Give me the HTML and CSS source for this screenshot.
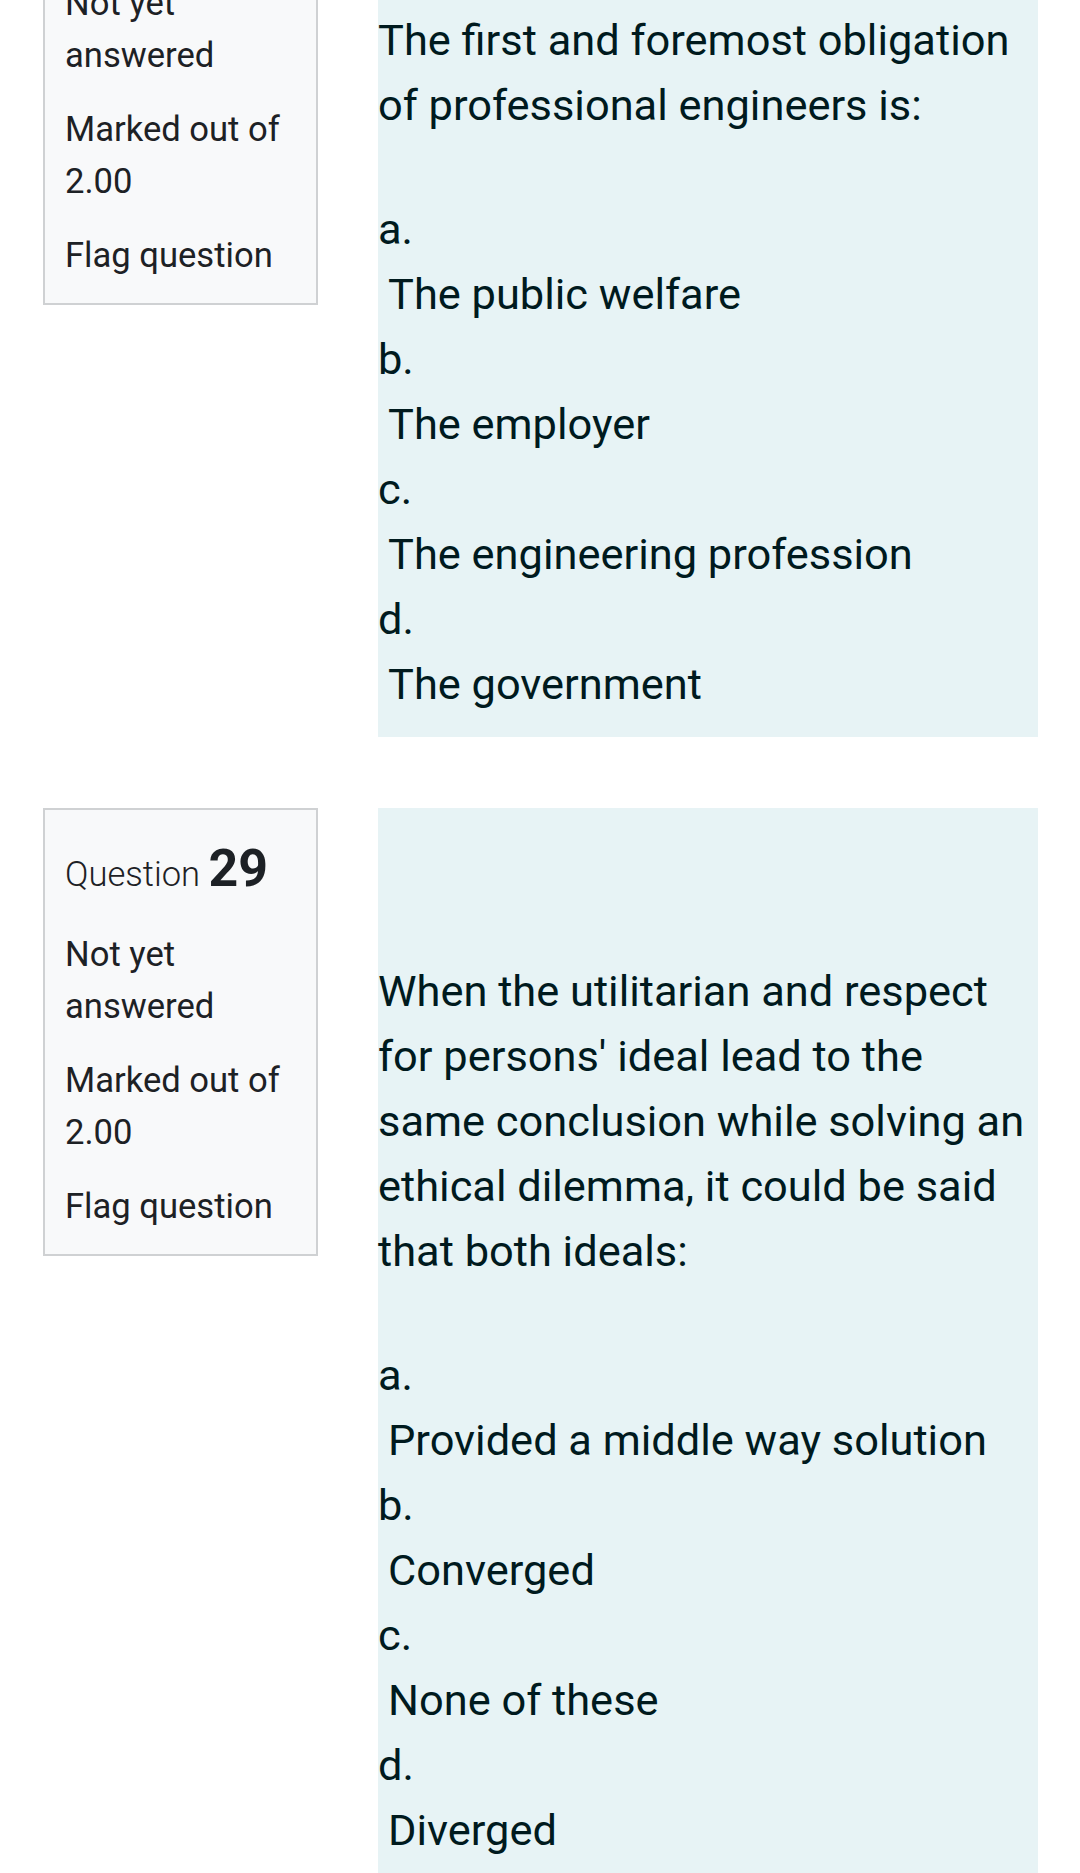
FILE: index.html
```html
<!DOCTYPE html>
<html lang="en">
<head>
<meta charset="utf-8">
<title>Quiz</title>
<link rel="stylesheet" href="styles.css">
</head>
<body>
<div class="page">
  <div class="que">
    <div class="info">
      <h3 class="no">Question <span class="qno">28</span></h3>
      <div class="state">Not yet answered</div>
      <div class="grade">Marked out of 2.00</div>
      <div class="flag">Flag question</div>
    </div>
    <div class="formulation">
      <div class="qtext">The first and foremost obligation of professional engineers is:</div>
      <div class="answer">
        <div class="opt"><span class="lbl">a.</span><span class="ans">The public welfare</span></div>
        <div class="opt"><span class="lbl">b.</span><span class="ans">The employer</span></div>
        <div class="opt"><span class="lbl">c.</span><span class="ans">The engineering profession</span></div>
        <div class="opt"><span class="lbl">d.</span><span class="ans">The government</span></div>
      </div>
    </div>
  </div>
  <div class="que">
    <div class="info">
      <h3 class="no">Question <span class="qno">29</span></h3>
      <div class="state">Not yet answered</div>
      <div class="grade">Marked out of 2.00</div>
      <div class="flag">Flag question</div>
    </div>
    <div class="formulation">
      <div class="qtext">When the utilitarian and respect for persons' ideal lead to the same conclusion while solving an ethical dilemma, it could be said that both ideals:</div>
      <div class="answer">
        <div class="opt"><span class="lbl">a.</span><span class="ans">Provided a middle way solution</span></div>
        <div class="opt"><span class="lbl">b.</span><span class="ans">Converged</span></div>
        <div class="opt"><span class="lbl">c.</span><span class="ans">None of these</span></div>
        <div class="opt"><span class="lbl">d.</span><span class="ans">Diverged</span></div>
      </div>
    </div>
  </div>
</div>
</body>
</html>
```

FILE: styles.css
```css
html, body {
  margin: 0;
  padding: 0;
  background: #ffffff;
}

body {
  font-family: Roboto, "Noto Sans", "Liberation Sans", sans-serif;
  overflow: hidden;
}

.page {
  margin-top: -143px;
}

.que {
  display: flex;
  align-items: flex-start;
  gap: 60px;
  padding-left: 43px;
}

.que + .que {
  margin-top: 71px;
}

.info {
  box-sizing: border-box;
  width: 275px;
  flex: none;
  background: #f8f9fa;
  border: 2px solid #cfd1d3;
  padding: 20px 20px 22px 20px;
  color: #1d2125;
  font-size: 34.6px;
  line-height: 52.5px;
}

.no {
  margin: 0 0 20px 0;
  font-size: 34.6px;
  font-weight: 300;
  line-height: 1.5;
}

.qno {
  font-size: 1.5em;
  font-weight: 700;
}

.state,
.grade {
  margin-bottom: 21px;
}

.formulation {
  box-sizing: border-box;
  width: 660px;
  flex: none;
  background: #e7f3f5;
  color: #001a1e;
  padding: 21px 0 20px 0;
  font-size: 43.4px;
  line-height: 65px;
}

.qtext {
  padding-top: 130px;
}

.answer {
  margin-top: 59px;
}

.lbl,
.ans {
  display: block;
}

.ans {
  padding-left: 10px;
}
```
